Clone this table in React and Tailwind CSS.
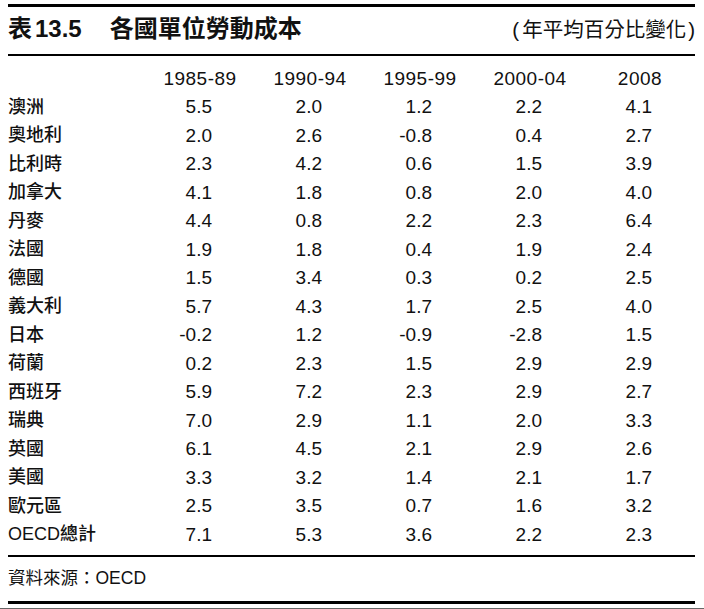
import React from 'react';

const years = ['1985-89', '1990-94', '1995-99', '2000-04', '2008'];

// 各國單位勞動成本 (年平均百分比變化)
const rows = [
  ['澳洲', '5.5', '2.0', '1.2', '2.2', '4.1'],
  ['奧地利', '2.0', '2.6', '-0.8', '0.4', '2.7'],
  ['比利時', '2.3', '4.2', '0.6', '1.5', '3.9'],
  ['加拿大', '4.1', '1.8', '0.8', '2.0', '4.0'],
  ['丹麥', '4.4', '0.8', '2.2', '2.3', '6.4'],
  ['法國', '1.9', '1.8', '0.4', '1.9', '2.4'],
  ['德國', '1.5', '3.4', '0.3', '0.2', '2.5'],
  ['義大利', '5.7', '4.3', '1.7', '2.5', '4.0'],
  ['日本', '-0.2', '1.2', '-0.9', '-2.8', '1.5'],
  ['荷蘭', '0.2', '2.3', '1.5', '2.9', '2.9'],
  ['西班牙', '5.9', '7.2', '2.3', '2.9', '2.7'],
  ['瑞典', '7.0', '2.9', '1.1', '2.0', '3.3'],
  ['英國', '6.1', '4.5', '2.1', '2.9', '2.6'],
  ['美國', '3.3', '3.2', '1.4', '2.1', '1.7'],
  ['歐元區', '2.5', '3.5', '0.7', '1.6', '3.2'],
  ['OECD總計', '7.1', '5.3', '3.6', '2.2', '2.3'],
];

const font = "font-['Liberation_Sans','Noto_Sans_CJK_TC',sans-serif]";

const App = () => {
  return (
    <div className={`w-[704px] h-[609px] bg-white text-[#111] overflow-hidden ${font}`}>
      <div className="ml-[8px] w-[687px] pt-[4px]">
        <div className="h-[3px] bg-black"></div>

        {/* title */}
        <div className="h-[47px] flex items-center justify-between">
          <div className="flex items-center text-[24px] font-bold leading-none -mt-[4px]">
            <span>表</span>
            <span className="ml-[3px]">13.5</span>
            <span className="ml-[28px]">各國單位勞動成本</span>
          </div>
          <div className="flex items-center text-[20.5px] leading-none">
            <span>(</span>
            <span className="ml-[3px]">年平均百分比變化</span>
            <span className="ml-[2px]">)</span>
          </div>
        </div>
        <div className="h-[2px] bg-black"></div>

        {/* table */}
        <div className="pt-[8px]">
          <div className="grid grid-cols-[137px_repeat(5,110px)] h-[28.5px] items-center text-[19px] leading-none">
            <div></div>
            {years.map((y) => (
              <div key={y} className="text-center tracking-[0.5px]">{y}</div>
            ))}
          </div>
          {rows.map((r) => (
            <div key={r[0]} className="grid grid-cols-[137px_repeat(5,110px)] h-[28.5px] items-center text-[19px] leading-none">
              <div className="text-[18px] font-medium">{r[0]}</div>
              {r.slice(1).map((v, i) => (
                <div key={i} className="text-right pr-[43px]">{v}</div>
              ))}
            </div>
          ))}
        </div>

        <div className="h-[2px] bg-black mt-[6px]"></div>
        <div className="h-[44px] flex items-center text-[17.5px] leading-none">資料來源：OECD</div>
        <div className="h-[3px] bg-black"></div>
      </div>
      <div className="h-[1px] bg-[#666] mt-[4px]"></div>
    </div>
  );
};

export default App;
